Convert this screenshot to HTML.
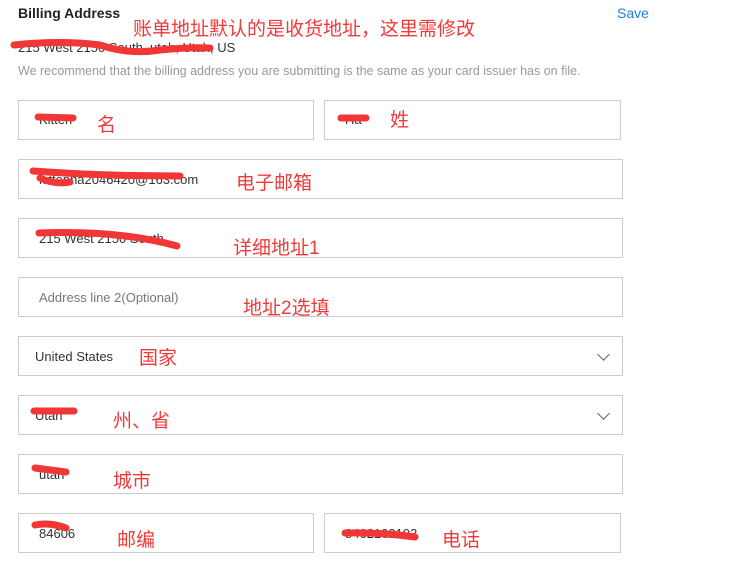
<!DOCTYPE html>
<html><head><meta charset="utf-8"><style>
body{margin:0;width:735px;height:569px;background:#fff;font-family:"Liberation Sans",Arial,sans-serif;position:relative;overflow:hidden}
.a{position:absolute}
.box{position:absolute;border:1px solid #ccc;height:38px;box-sizing:content-box}
.t{position:absolute;font-size:13px;color:#333}
.r{position:absolute;color:#f03a3a;font-family:"Liberation Sans","Noto Sans CJK SC",sans-serif;font-size:19px;margin-top:-3px}
.chev{position:absolute;width:8px;height:8px;border-right:1.6px solid #666;border-bottom:1.6px solid #666;transform:rotate(45deg)}
</style></head><body>
<div class="a" style="left:18px;top:5px;font-weight:bold;font-size:14px;color:#222">Billing Address</div>
<div class="a" style="left:617px;top:5px;font-size:14px;color:#1a7fe0">Save</div>
<div class="t" style="left:18px;top:40px;font-size:13px">215 West 2150 South, utah, Utah, US</div>
<div class="a" style="left:18px;top:64px;font-size:12.5px;color:#999">We recommend that the billing address you are submitting is the same as your card issuer has on file.</div>
<div class="r" style="left:133px;top:17px">账单地址默认的是收货地址，这里需修改</div>

<div class="box" style="left:18px;top:100px;width:294px"></div>
<div class="box" style="left:324px;top:100px;width:295px"></div>
<div class="t" style="left:39px;top:112px">Kitten</div><div class="t" style="left:345px;top:112px">Ha</div>
<div class="r" style="left:97px;top:113px">名</div><div class="r" style="left:390px;top:108px">姓</div>

<div class="box" style="left:18px;top:159px;width:603px"></div>
<div class="t" style="left:39px;top:172px">kittenha2046420@163.com</div>
<div class="r" style="left:236px;top:171px">电子邮箱</div>

<div class="box" style="left:18px;top:218px;width:603px"></div>
<div class="t" style="left:39px;top:231px">215 West 2150 South</div>
<div class="r" style="left:233px;top:236px">详细地址1</div>

<div class="box" style="left:18px;top:277px;width:603px"></div>
<div class="t" style="left:39px;top:290px;color:#777">Address line 2(Optional)</div>
<div class="r" style="left:243px;top:296px">地址2选填</div>

<div class="box" style="left:18px;top:336px;width:603px"></div>
<div class="t" style="left:35px;top:349px">United States</div>
<div class="chev" style="left:599px;top:350px"></div>
<div class="r" style="left:139px;top:346px">国家</div>

<div class="box" style="left:18px;top:395px;width:603px"></div>
<div class="t" style="left:35px;top:408px">Utah</div>
<div class="chev" style="left:599px;top:409px"></div>
<div class="r" style="left:113px;top:409px">州、省</div>

<div class="box" style="left:18px;top:454px;width:603px"></div>
<div class="t" style="left:39px;top:467px">utah</div>
<div class="r" style="left:113px;top:469px">城市</div>

<div class="box" style="left:18px;top:513px;width:294px"></div>
<div class="box" style="left:324px;top:513px;width:295px"></div>
<div class="t" style="left:39px;top:526px">84606</div><div class="t" style="left:345px;top:526px">8462103193</div>
<div class="r" style="left:117px;top:528px">邮编</div><div class="r" style="left:442px;top:528px">电话</div>

<svg class="a" style="left:0;top:0" width="735" height="569"><g fill="none" stroke="#f23535" stroke-linecap="round">
<path d="M14 45 Q60 40 100 45 Q130 55 160 50 Q190 47 210 48" stroke-width="7"/>
<path d="M38 117 L73 118" stroke-width="7"/><path d="M341 118 L366 118" stroke-width="7"/>
<path d="M33 171 Q100 176 180 176 M40 178 Q55 185 70 182" stroke-width="7"/>
<path d="M39 233 Q120 230 177 246" stroke-width="7"/>
<path d="M34 411 L74 411" stroke-width="7"/><path d="M35 468 L66 472" stroke-width="7"/>
<path d="M35 525 Q50 522 66 528" stroke-width="7"/><path d="M345 533 Q380 532 415 537" stroke-width="7"/>
</g></svg>
</body></html>
